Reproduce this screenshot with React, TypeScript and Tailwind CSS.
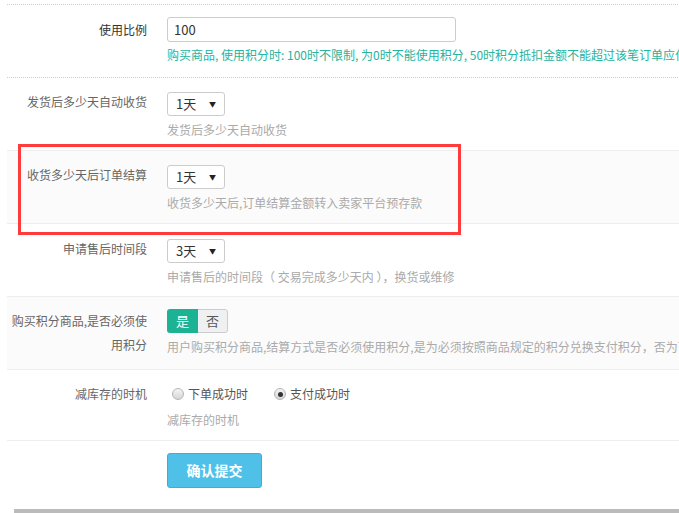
import React from "react";

const font = { fontFamily: '"Noto Sans CJK SC", "Liberation Sans", sans-serif' };

function Select({ value }: { value: string }) {
  return (
    <div className="w-[58px] h-[24px] border border-[#ccc] rounded-[3px] bg-white flex items-center justify-between pl-[8px] pr-[8px] text-[13px] text-[#333]">
      <span>{value}</span>
      <span className="text-[7px] text-[#222]">▼</span>
    </div>
  );
}

function Radio({ checked, label }: { checked?: boolean; label: string }) {
  return (
    <div className="flex items-center">
      <span className="w-[12px] h-[12px] rounded-full border border-[#b5b5b5] bg-gradient-to-b from-[#f4f4f4] to-[#d6d6d6] flex items-center justify-center">
        {checked && <span className="w-[5px] h-[5px] rounded-full bg-[#333]" />}
      </span>
      <span className="ml-[4px] text-[12px] text-[#555]">{label}</span>
    </div>
  );
}

export default function App() {
  return (
    <div className="relative w-[679px] h-[513px] overflow-hidden bg-white whitespace-nowrap" style={font}>
      <div className="pl-[7px] pt-[4px] w-[1000px]">
        {/* Row 1 */}
        <div className="flex border-t border-dotted border-[#ccc] pt-[12px] pb-[14px]">
          <div className="w-[140px] shrink-0 text-right text-[12px] leading-[25px] text-[#333]">使用比例</div>
          <div className="ml-[20px]">
            <div className="w-[289px] h-[25px] border border-[#ccc] rounded-[3px] flex items-center pl-[6px] text-[13px] text-[#333]">100</div>
            <div className="mt-[4px] text-[12px] leading-[17px] text-[#26b3a0]">
              购买商品, 使用积分时: 100时不限制, 为0时不能使用积分, 50时积分抵扣金额不能超过该笔订单应付金额的50%
            </div>
          </div>
        </div>
        {/* Row 2 */}
        <div className="flex border-t border-dotted border-[#ccc] pt-[14px] pb-[12px]">
          <div className="w-[140px] shrink-0 text-right text-[12px] leading-[20px] text-[#666]">发货后多少天自动收货</div>
          <div className="ml-[20px]">
            <Select value="1天" />
            <div className="mt-[5px] text-[12px] leading-[17px] text-[#aaa]">发货后多少天自动收货</div>
          </div>
        </div>
        {/* Row 3 */}
        <div className="flex border-t border-[#eee] bg-[#fbfbfb] pt-[14px] pb-[12px]">
          <div className="w-[140px] shrink-0 text-right text-[12px] leading-[20px] text-[#666]">收货多少天后订单结算</div>
          <div className="ml-[20px]">
            <Select value="1天" />
            <div className="mt-[5px] text-[12px] leading-[17px] text-[#aaa]">收货多少天后,订单结算金额转入卖家平台预存款</div>
          </div>
        </div>
        {/* Row 4 */}
        <div className="flex border-t border-[#eee] pt-[15px] pb-[11px]">
          <div className="w-[140px] shrink-0 text-right text-[12px] leading-[20px] text-[#666]">申请售后时间段</div>
          <div className="ml-[20px]">
            <Select value="3天" />
            <div className="mt-[5px] text-[12px] leading-[17px] text-[#aaa]">申请售后的时间段（ 交易完成多少天内 ），换货或维修</div>
          </div>
        </div>
        {/* Row 5 */}
        <div className="flex border-t border-[#eee] bg-[#fbfbfb] pt-[12px] pb-[12px]">
          <div className="w-[140px] shrink-0 text-right text-[12px] leading-[24px] text-[#666] whitespace-normal">
            购买积分商品,是否必须使
            <br />
            用积分
          </div>
          <div className="ml-[20px]">
            <div className="flex h-[24px] w-[61px] rounded-[3px] overflow-hidden text-[13px]">
              <div className="w-[31px] bg-[#1bb394] text-white flex items-center justify-center">是</div>
              <div className="flex-1 bg-[#eef0f1] border border-l-0 border-[#ccc] rounded-r-[3px] text-[#555] flex items-center justify-center">否</div>
            </div>
            <div className="mt-[5px] text-[12px] leading-[17px] text-[#aaa]">
              用户购买积分商品,结算方式是否必须使用积分,是为必须按照商品规定的积分兑换支付积分，否为可以使用现金支付
            </div>
          </div>
        </div>
        {/* Row 6 */}
        <div className="flex border-t border-[#eee] pt-[12px] pb-[12px]">
          <div className="w-[140px] shrink-0 text-right text-[12px] leading-[24px] text-[#666]">减库存的时机</div>
          <div className="ml-[20px]">
            <div className="flex items-center h-[24px] pl-[5px] gap-[26px]">
              <Radio label="下单成功时" />
              <Radio checked label="支付成功时" />
            </div>
            <div className="mt-[5px] text-[12px] leading-[17px] text-[#aaa]">减库存的时机</div>
          </div>
        </div>
        {/* Submit */}
        <div className="flex border-t border-[#eee] pt-[12px]">
          <div className="w-[140px] shrink-0" />
          <div className="ml-[20px]">
            <button className="w-[95px] h-[35px] bg-[#4fc1e9] border border-[#3bafda] rounded-[3px] text-white text-[14px] font-bold">
              确认提交
            </button>
          </div>
        </div>
      </div>
      {/* bottom scrollbar strip */}
      <div className="absolute left-[14px] right-0 bottom-0 h-[4px] bg-[#bbb]" />
      {/* Red highlight box */}
      <div className="absolute left-[18px] top-[144px] w-[443px] h-[91px] border-[3px] border-[#ff3b3b]" />
    </div>
  );
}
